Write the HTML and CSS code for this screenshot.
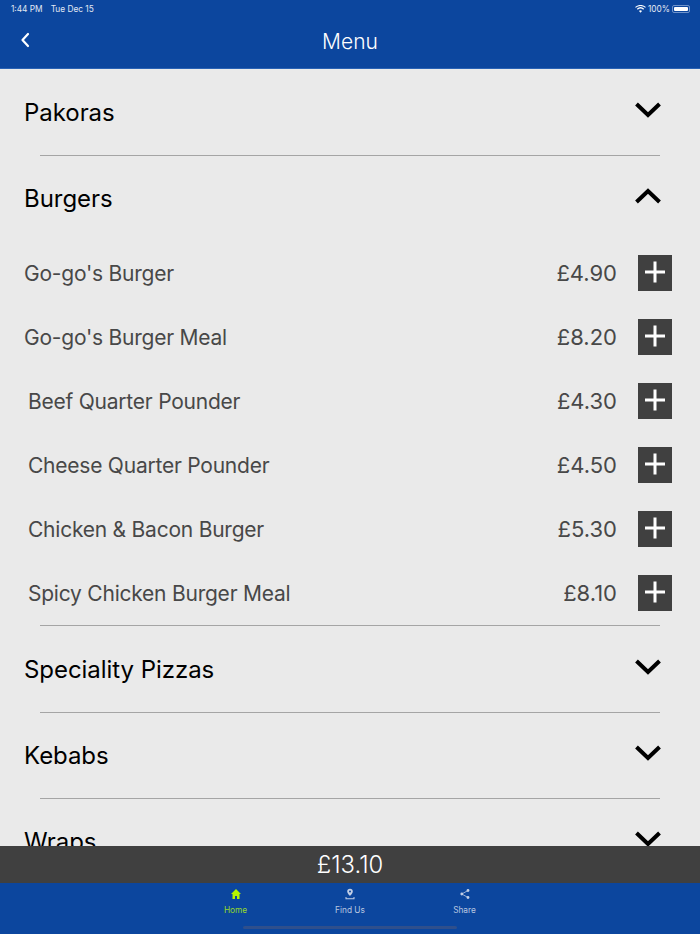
FILE: index.html
```
<!DOCTYPE html>
<html lang="en">
<head>
<meta charset="utf-8">
<title>Menu</title>
<link rel="stylesheet" href="styles.css">
</head>
<body>
<div class="app">
  <header class="top">
    <div class="status">
      <div class="status-left"><span>1:44 PM</span><span>Tue Dec 15</span></div>
      <div class="status-right">
        <svg class="wifi" viewBox="0 0 12 9" width="11" height="8"><path d="M6 8.600 4.300 6.700a2.500 2.500 0 0 1 3.400 0ZM2.900 5.300a4.600 4.600 0 0 1 6.200 0l1-1.100a6.100 6.100 0 0 0-8.200 0ZM.7 3.100a7.800 7.800 0 0 1 10.600 0l.7-.9a9 9 0 0 0-12 0Z" fill="#fff"/></svg>
        <span>100%</span>
        <span class="battery"><span class="battery-fill"></span></span>
      </div>
    </div>
    <div class="nav">
      <svg class="back" viewBox="0 0 10 16" width="10" height="16"><path d="M8 2 2.500 8 8 14" fill="none" stroke="#fff" stroke-width="2.200" stroke-linecap="round" stroke-linejoin="round"/></svg>
      <h1 class="title">Menu</h1>
    </div>
  </header>
  <main class="content">
    <section class="cat">
      <h2>Pakoras</h2>
      <svg class="chev" viewBox="0 0 28 18" width="28" height="18"><path d="M2.500 3 14 14 25.500 3" fill="none" stroke="#000" stroke-width="4"/></svg>
    </section>
    <div class="rule"></div>
    <section class="cat">
      <h2>Burgers</h2>
      <svg class="chev" viewBox="0 0 28 18" width="28" height="18"><path d="M2.500 15 14 4 25.500 15" fill="none" stroke="#000" stroke-width="4"/></svg>
    </section>
    <div class="items">
      <div class="item"><span class="name">Go-go's Burger</span><span class="price">£4.90</span><button class="add"><svg viewBox="0 0 22 22" width="22" height="22"><path d="M11 .5v21M1 11h20" stroke="#fff" stroke-width="3"/></svg></button></div>
      <div class="item"><span class="name">Go-go's Burger Meal</span><span class="price">£8.20</span><button class="add"><svg viewBox="0 0 22 22" width="22" height="22"><path d="M11 .5v21M1 11h20" stroke="#fff" stroke-width="3"/></svg></button></div>
      <div class="item inset"><span class="name">Beef Quarter Pounder</span><span class="price">£4.30</span><button class="add"><svg viewBox="0 0 22 22" width="22" height="22"><path d="M11 .5v21M1 11h20" stroke="#fff" stroke-width="3"/></svg></button></div>
      <div class="item inset"><span class="name">Cheese Quarter Pounder</span><span class="price">£4.50</span><button class="add"><svg viewBox="0 0 22 22" width="22" height="22"><path d="M11 .5v21M1 11h20" stroke="#fff" stroke-width="3"/></svg></button></div>
      <div class="item inset"><span class="name">Chicken &amp; Bacon Burger</span><span class="price">£5.30</span><button class="add"><svg viewBox="0 0 22 22" width="22" height="22"><path d="M11 .5v21M1 11h20" stroke="#fff" stroke-width="3"/></svg></button></div>
      <div class="item inset"><span class="name">Spicy Chicken Burger Meal</span><span class="price">£8.10</span><button class="add"><svg viewBox="0 0 22 22" width="22" height="22"><path d="M11 .5v21M1 11h20" stroke="#fff" stroke-width="3"/></svg></button></div>
      <div class="rule"></div>
    </div>
    <section class="cat">
      <h2>Speciality Pizzas</h2>
      <svg class="chev" viewBox="0 0 28 18" width="28" height="18"><path d="M2.500 3 14 14 25.500 3" fill="none" stroke="#000" stroke-width="4"/></svg>
    </section>
    <div class="rule"></div>
    <section class="cat">
      <h2>Kebabs</h2>
      <svg class="chev" viewBox="0 0 28 18" width="28" height="18"><path d="M2.500 3 14 14 25.500 3" fill="none" stroke="#000" stroke-width="4"/></svg>
    </section>
    <div class="rule"></div>
    <section class="cat">
      <h2>Wraps</h2>
      <svg class="chev" viewBox="0 0 28 18" width="28" height="18"><path d="M2.500 3 14 14 25.500 3" fill="none" stroke="#000" stroke-width="4"/></svg>
    </section>
  </main>
  <div class="total">£13.10</div>
  <nav class="tabs">
    <div class="tab active">
      <svg viewBox="0 0 12 12" width="12" height="12"><path d="M6 1 1 6h1.500v5h2.500V8h2v3h2.500V6H11Z" fill="#b6f500"/></svg>
      <span>Home</span>
    </div>
    <div class="tab">
      <svg viewBox="0 0 12 12" width="12" height="12"><path d="M6 .8a2.800 2.800 0 0 0-2.800 2.800C3.200 5.500 6 8 6 8s2.800-2.500 2.800-4.400A2.800 2.800 0 0 0 6 .8Zm0 3.800a1 1 0 1 1 0-2 1 1 0 0 1 0 2ZM1.500 9v2.200h9V9h-1v1.200h-7V9Z" fill="#c3cfe6"/></svg>
      <span>Find Us</span>
    </div>
    <div class="tab">
      <svg viewBox="0 0 12 12" width="12" height="12"><circle cx="9" cy="2.500" r="1.400" fill="#c3cfe6"/><circle cx="2.800" cy="6" r="1.400" fill="#c3cfe6"/><circle cx="9" cy="9.500" r="1.400" fill="#c3cfe6"/><path d="M9 2.500 2.800 6 9 9.500" fill="none" stroke="#c3cfe6" stroke-width=".8"/></svg>
      <span>Share</span>
    </div>
    <div class="home-bar"></div>
  </nav>
</div>
</body>
</html>
```
FILE: styles.css
```
* { box-sizing: border-box; }
html, body { margin: 0; height: 100%; }
body { font-family: Inter, "Liberation Sans", sans-serif; background: #eaeaea; }
.app { width: 700px; height: 934px; display: flex; flex-direction: column; overflow: hidden; }
.top { height: 69px; flex: none; background: #0c469e; border-bottom: 1px solid #2a62b4; color: #fff; }
.status { height: 17px; display: flex; justify-content: space-between; align-items: center; padding: 0 10px 0 11px; font-size: 8.300px; color: #e2e8f3; }
.status-left { display: flex; gap: 8px; }
.status-right { display: flex; align-items: center; gap: 2px; }
.battery { width: 18px; height: 8px; border: 1px solid #6f93cb; border-radius: 2px; padding: 1px; display: block; }
.battery-fill { display: block; height: 100%; background: #fff; border-radius: 1px; }
.nav { height: 51px; position: relative; display: flex; align-items: center; justify-content: center; }
.back { position: absolute; left: 20px; top: 15px; }
.title { margin: 0; font-size: 21px; font-weight: 300; position: relative; top: -1px; }
.content { flex: 1; min-height: 0; overflow: hidden; }
.cat { height: 86px; display: flex; align-items: center; justify-content: space-between; padding: 0 38px 0 24px; }
.cat h2 { margin: 0; font-size: 24px; font-weight: 400; letter-spacing: -0.05px; color: #000; }
.chev { position: relative; top: -2px; }
.rule { height: 1px; margin: -1px 40px 0; background: #a5a5a5; position: relative; top: 1px; }
.items { display: flex; flex-direction: column; }
.items .rule { margin: 0 40px; top: 0; flex: none; }
.item { height: 64px; flex: none; display: flex; align-items: center; padding: 0 28px 0 24px; color: #484848; font-size: 21px; font-weight: 400; letter-spacing: -0.23px; }
.item.inset { padding-left: 28px; }
.name { flex: 1; }
.price { margin-right: 21px; font-size: 22px; letter-spacing: 0; }
.add { width: 34px; height: 36px; padding: 0 0 2px; border: 0; background: #404040; display: flex; align-items: center; justify-content: center; }
.total { height: 37px; flex: none; background: #404040; color: #fff; font-size: 23.800px; font-weight: 300; display: flex; align-items: center; justify-content: center; }
.tabs { height: 51px; flex: none; background: #0c469e; display: flex; justify-content: center; position: relative; }
.tab { width: 114.500px; display: flex; flex-direction: column; align-items: center; padding-top: 5px; gap: 5px; font-size: 8.300px; color: #b9c6e0; }
.tab.active { color: #95d82a; }
.home-bar { position: absolute; left: 243px; right: 243px; bottom: 5px; height: 3px; border-radius: 2px; background: #2f4f8c; }
```
